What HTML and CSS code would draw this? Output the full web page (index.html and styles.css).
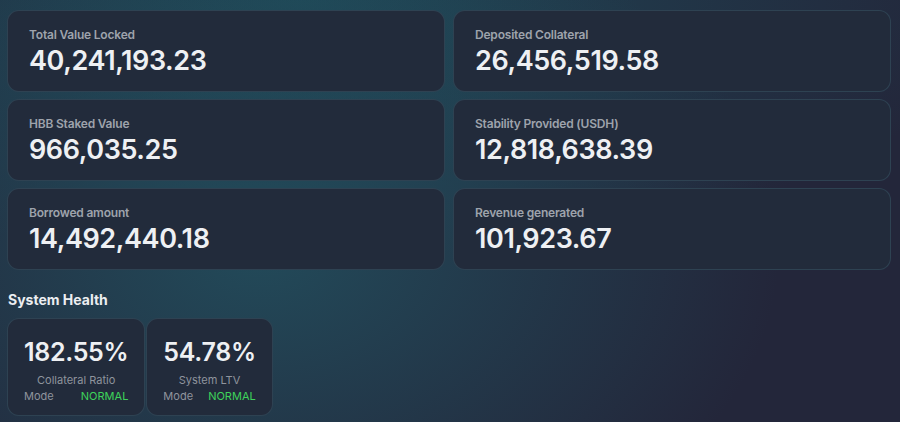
FILE: index.html
```html
<!DOCTYPE html>
<html>
<head>
<meta charset="utf-8">
<link rel="stylesheet" href="styles.css">
</head>
<body>
<div class="page">
  <div class="stats">
    <div class="card"><div class="label">Total Value Locked</div><div class="value">40,241,193.23</div></div>
    <div class="card"><div class="label">Deposited Collateral</div><div class="value">26,456,519.58</div></div>
    <div class="card"><div class="label">HBB Staked Value</div><div class="value">966,035.25</div></div>
    <div class="card"><div class="label">Stability Provided (USDH)</div><div class="value">12,818,638.39</div></div>
    <div class="card"><div class="label">Borrowed amount</div><div class="value">14,492,440.18</div></div>
    <div class="card"><div class="label">Revenue generated</div><div class="value">101,923.67</div></div>
  </div>
  <h2 class="heading">System Health</h2>
  <div class="health">
    <div class="hcard">
      <div class="hinner">
        <div class="hvalue">182.55%</div>
        <div class="hlabel">Collateral Ratio</div>
        <div class="mode"><span>Mode</span><span class="ok">NORMAL</span></div>
      </div>
    </div>
    <div class="hcard">
      <div class="hinner">
        <div class="hvalue">54.78%</div>
        <div class="hlabel">System LTV</div>
        <div class="mode"><span>Mode</span><span class="ok">NORMAL</span></div>
      </div>
    </div>
  </div>
</div>
</body>
</html>
```
FILE: styles.css
```css
html, body {
  margin: 0;
  height: 100%;
}
body {
  font-family: Inter, "Noto Sans", sans-serif;
  background:
    radial-gradient(ellipse 520px 360px at 260px 250px, rgba(34, 86, 100, 0.75), rgba(34, 86, 100, 0) 100%),
    radial-gradient(ellipse 700px 260px at 300px 0px, rgba(30, 78, 92, 0.8), rgba(30, 78, 92, 0) 100%),
    #23263a;
  color: #eceef1;
  overflow: hidden;
}
.page {
  padding: 10px 9px 0 7px;
}
.stats {
  display: grid;
  grid-template-columns: 1fr 1fr;
  column-gap: 8px;
  row-gap: 7px;
}
.card {
  height: 82px;
  box-sizing: border-box;
  background: #222b3b;
  border: 1px solid rgba(70, 110, 125, 0.35);
  border-radius: 12px;
  padding: 16px 21px 0;
}
.label {
  font-size: 12px;
  font-weight: 600;
  color: #9ea3ac;
  line-height: 16px;
  letter-spacing: -0.2px;
}
.value {
  font-size: 27px;
  font-weight: 600;
  line-height: 32px;
  margin-top: 2px;
  color: #eef0f3;
  letter-spacing: -0.4px;
}
.heading {
  margin: 20px 0 0 1px;
  font-size: 14px;
  font-weight: 700;
  line-height: 20px;
  color: #eceef1;
  letter-spacing: 0;
}
.health {
  display: flex;
  gap: 1px;
  margin-top: 8px;
}
.hcard {
  box-sizing: border-box;
  height: 98px;
  background: #222b3b;
  border: 1px solid rgba(70, 110, 125, 0.35);
  border-radius: 12px;
  padding: 18px 16px 0;
}
.hinner {
  display: inline-flex;
  flex-direction: column;
  align-items: stretch;
}
.hvalue {
  font-size: 25px;
  font-weight: 600;
  line-height: 30px;
  color: #eef0f3;
  letter-spacing: -0.3px;
}
.hlabel {
  font-size: 11px;
  color: #8f949d;
  text-align: center;
  line-height: 14px;
  margin-top: 6px;
}
.mode {
  display: flex;
  justify-content: space-between;
  font-size: 11px;
  line-height: 14px;
  margin-top: 2px;
  color: #8f949d;
}
.ok {
  color: #3ed35a;
}
```
